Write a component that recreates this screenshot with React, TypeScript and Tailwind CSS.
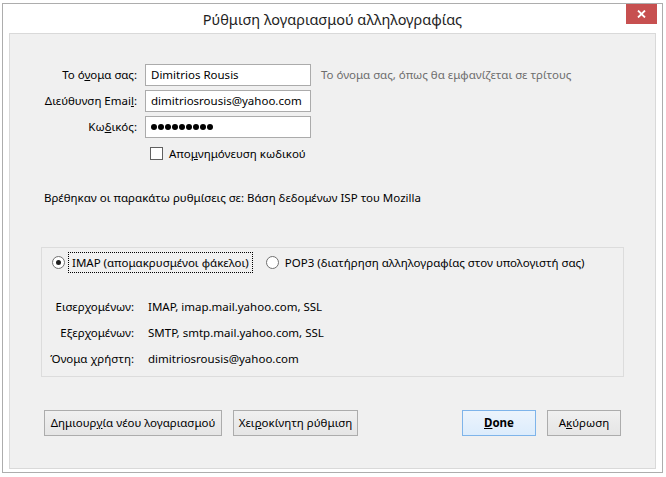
import type { ReactNode } from 'react';

function Field({ label, children, hint }: { label: ReactNode; children: ReactNode; hint?: string }) {
  return (
    <div className="flex h-[22px] items-center">
      <div className="w-[127px] text-right">{label}</div>
      <div className="ml-[8px] flex h-[22px] w-[166px] items-center border border-[#ababab] bg-white pl-[5px]">
        {children}
      </div>
      {hint && <div className="ml-[10px] text-[#6d6d6d]">{hint}</div>}
    </div>
  );
}

function Radio({ checked }: { checked?: boolean }) {
  return (
    <div className="flex h-[13px] w-[13px] shrink-0 items-center justify-center rounded-full border border-[#707070] bg-white">
      {checked && <div className="h-[5px] w-[5px] rounded-full bg-[#1e1e1e]" />}
    </div>
  );
}

function Btn({ children, w, primary }: { children: ReactNode; w: string; primary?: boolean }) {
  return (
    <button
      className={
        primary
          ? `flex h-[26px] ${w} items-center justify-center border border-[#7eb4ea] bg-gradient-to-b from-[#ecf4fc] to-[#dcecfc] font-bold`
          : `flex h-[26px] ${w} items-center justify-center border border-[#acacac] bg-gradient-to-b from-[#f0f0f0] to-[#e5e5e5]`
      }
    >
      {children}
    </button>
  );
}

export default function App() {
  return (
    <div className="h-[477px] w-[666px] bg-white pl-[2px] pt-[3px] font-['Segoe_UI','Noto_Sans',sans-serif] text-[11.5px] leading-[16px] text-black">
      <div className="relative flex h-[470px] w-[661px] flex-col border border-[#adadad] bg-white px-[6px] pb-[3px]">
        {/* τίτλος */}
        <div className="flex h-[29px] items-center justify-center text-[14.5px] text-[#1e1e1e]">
          Ρύθμιση λογαριασμού αλληλογραφίας
        </div>
        <div className="absolute right-[5px] top-0 flex h-[20px] w-[31px] items-center justify-center bg-[#c75050]">
          <svg width="9" height="8" viewBox="0 0 9 8">
            <path d="M1 0.5 L8 7.5 M8 0.5 L1 7.5" stroke="white" strokeWidth="1.8" />
          </svg>
        </div>

        {/* περιεχόμενο */}
        <div className="flex flex-1 flex-col border border-[#d9d9d9] bg-[#f0f0f0]">
          <div className="mt-[30px] flex flex-col gap-[4px]">
            <Field
              label={
                <>
                  Το ό<span className="underline">ν</span>ομα σας:
                </>
              }
              hint="Το όνομα σας, όπως θα εμφανίζεται σε τρίτους"
            >
              Dimitrios Rousis
            </Field>
            <Field
              label={
                <>
                  Διεύθυνση Emai<span className="underline">l</span>:
                </>
              }
            >
              dimitriosrousis@yahoo.com
            </Field>
            <Field
              label={
                <>
                  Κω<span className="underline">δ</span>ικός:
                </>
              }
            >
              <div className="flex gap-[1px]">
                {Array.from({ length: 9 }).map((_, i) => (
                  <span key={i} className="h-[6px] w-[6px] rounded-full bg-black" />
                ))}
              </div>
            </Field>
          </div>

          <div className="mt-[9px] flex h-[13px] items-center pl-[140px]">
            <div className="h-[13px] w-[13px] border border-[#606060] bg-white" />
            <span className="ml-[6px]">
              Απο<span className="underline">μ</span>νημόνευση κωδικού
            </span>
          </div>

          <div className="mt-[30px] pl-[34px]">
            Βρέθηκαν οι παρακάτω ρυθμίσεις σε: Βάση δεδομένων ISP του Mozilla
          </div>

          {/* ρυθμίσεις διακομιστή */}
          <div className="ml-[31px] mt-[41px] flex h-[130px] w-[583px] flex-col border border-[#dcdcdc]">
            <div className="mt-[4px] flex h-[21px] items-center pl-[10px]">
              <Radio checked />
              <div className="ml-[3px] flex h-[21px] items-center border border-dotted border-black px-[3px]">
                IMAP (απομακρυσμένοι φάκελοι)
              </div>
              <div className="ml-[13px]">
                <Radio />
              </div>
              <span className="ml-[6px]">POP3 (διατήρηση αλληλογραφίας στον υπολογιστή σας)</span>
            </div>

            <div className="mt-[21px] flex flex-col">
              {[
                ['Εισερχομένων:', 'IMAP, imap.mail.yahoo.com, SSL'],
                ['Εξερχομένων:', 'SMTP, smtp.mail.yahoo.com, SSL'],
                ['Όνομα χρήστη:', 'dimitriosrousis@yahoo.com'],
              ].map(([k, v]) => (
                <div key={k} className="flex h-[26px] items-center">
                  <div className="w-[92px] whitespace-nowrap text-right">{k}</div>
                  <div className="ml-[14px]">{v}</div>
                </div>
              ))}
            </div>
          </div>

          {/* κουμπιά */}
          <div className="mt-[33px] flex px-[34px]">
            <Btn w="w-[178px]">
              Δημιουρ<span className="underline">γ</span>ία νέου λογαριασμού
            </Btn>
            <div className="ml-[11px]">
              <Btn w="w-[125px]">
                Χει<span className="underline">ρ</span>οκίνητη ρύθμιση
              </Btn>
            </div>
            <div className="flex-1" />
            <Btn w="w-[74px]" primary>
              <span className="underline">D</span>one
            </Btn>
            <div className="ml-[11px]">
              <Btn w="w-[74px]">
                Α<span className="underline">κ</span>ύρωση
              </Btn>
            </div>
          </div>
        </div>
      </div>
    </div>
  );
}
